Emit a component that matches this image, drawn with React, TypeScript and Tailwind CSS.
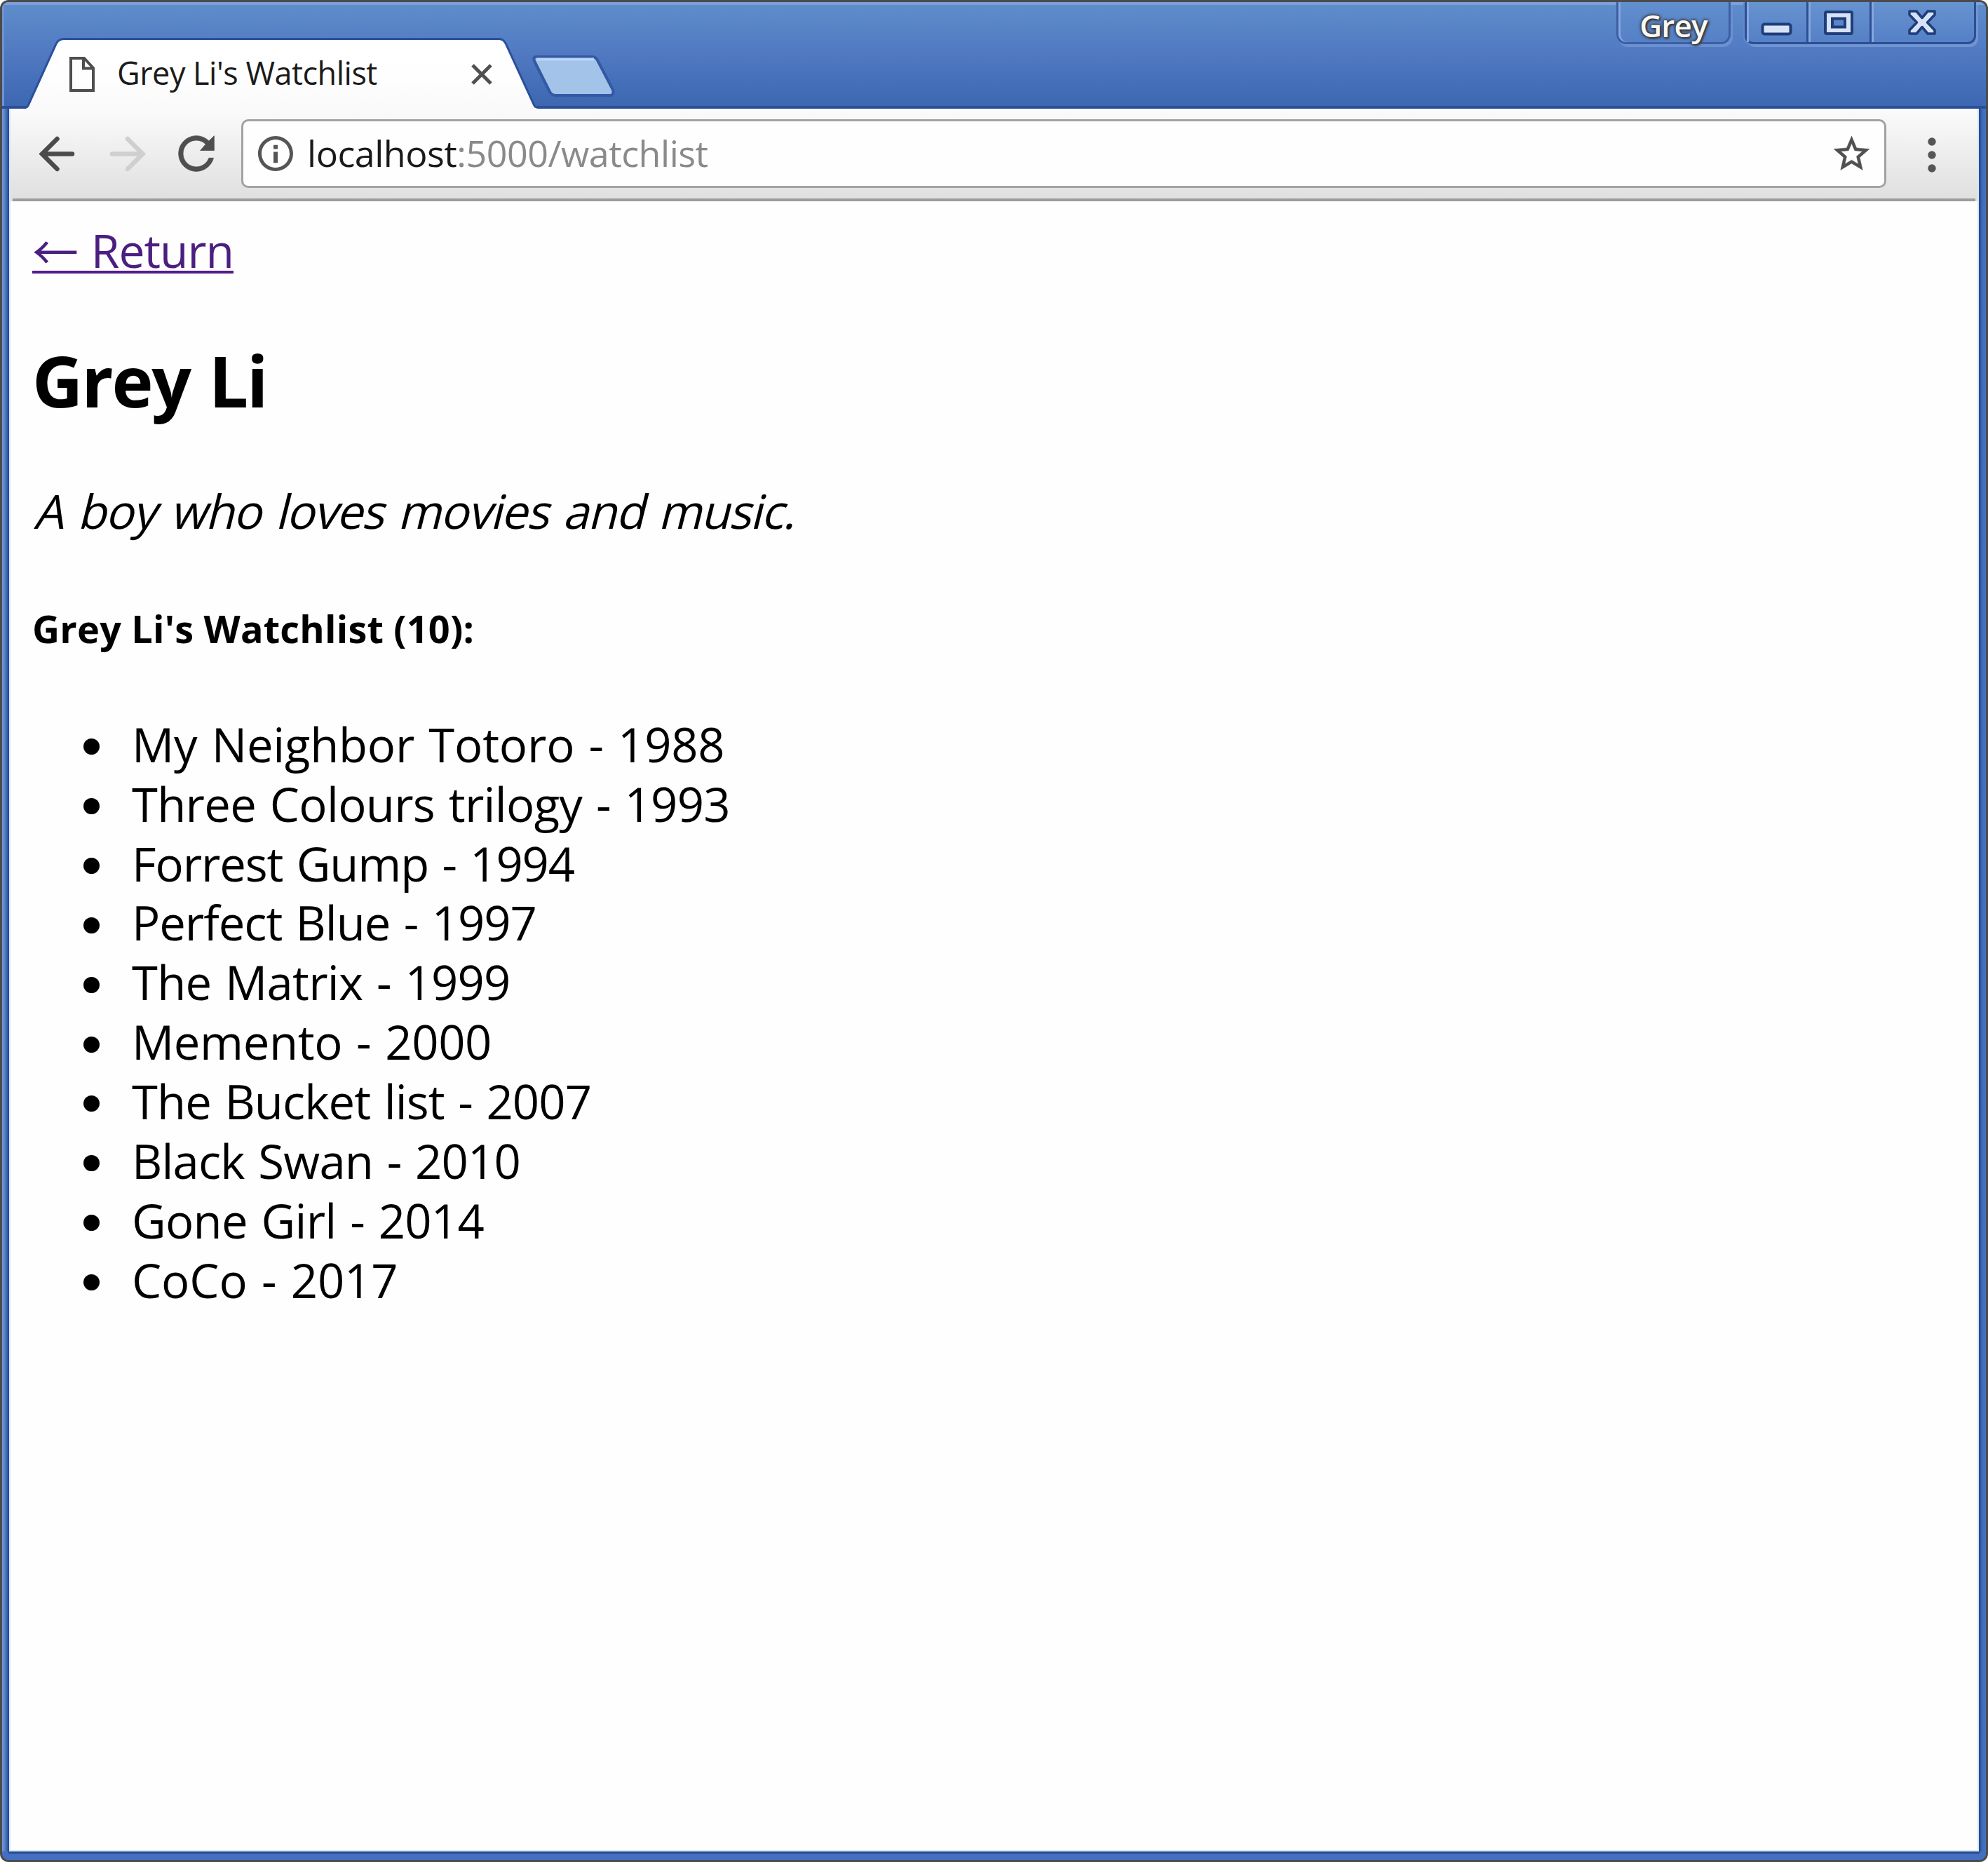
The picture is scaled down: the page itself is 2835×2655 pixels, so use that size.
const movies = [
  { title: 'My Neighbor Totoro', year: 1988, tracking: 'tracking-[-0.2px]' },
  { title: 'Three Colours trilogy', year: 1993, tracking: 'tracking-[-0.7px]' },
  { title: 'Forrest Gump', year: 1994, tracking: 'tracking-[-1.1px]' },
  { title: 'Perfect Blue', year: 1997, tracking: 'tracking-[-1.03px]' },
  { title: 'The Matrix', year: 1999, tracking: 'tracking-[-0.75px]' },
  { title: 'Memento', year: 2000, tracking: 'tracking-[-0.39px]' },
  { title: 'The Bucket list', year: 2007, tracking: 'tracking-[-0.9px]' },
  { title: 'Black Swan', year: 2010, tracking: 'tracking-[-0.8px]' },
  { title: 'Gone Girl', year: 2014, tracking: 'tracking-[-0.73px]' },
  { title: 'CoCo', year: 2017, tracking: 'tracking-[-0.1px]' },
];

function Tab() {
  return (
    <div className="relative mt-[50px] ml-[34px] flex h-[102px] w-[730px] shrink-0 items-center pl-[60px]">
      <svg className="absolute inset-0" width="730" height="102" viewBox="0 0 730 102">
        <defs>
          <linearGradient id="tabFill" x1="0" y1="0" x2="0" y2="1">
            <stop offset="0" stopColor="#ffffff" />
            <stop offset="0.5" stopColor="#fefefe" />
            <stop offset="1" stopColor="#f9f9f9" />
          </linearGradient>
        </defs>
        <path
          d="M-2 102 Q3 102 5 97 L44 11 Q47 4 54 4 H675 Q680 4 683 10 L723 97 Q725 102 731 102 V106 H-2Z"
          fill="url(#tabFill)"
          stroke="#2b509b"
          strokeWidth="6"
          paintOrder="stroke"
        />
      </svg>
      <svg className="relative mt-1 shrink-0" width="40" height="54" viewBox="0 0 40 54" fill="none" stroke="#4e4e4e" strokeWidth="4">
        <path d="M4 4 H23 L36 18 V50 H4Z M22 4 V18.500 H36" />
      </svg>
      <span className="relative ml-[30px] text-[45px] leading-[60px] tracking-[-0.5px] whitespace-nowrap text-[#1b1b1b]">
        Grey Li's Watchlist
      </span>
      <svg className="relative mt-1 mr-[62px] ml-auto" width="36" height="36" viewBox="0 0 36 36" stroke="#505050" strokeWidth="5">
        <path d="M5 5 L31 31 M31 5 L5 31" />
      </svg>
    </div>
  );
}

function WindowControls() {
  return (
    <div className="mr-[14px] ml-[20px] flex h-[60px] w-[330px] rounded-b-[12px] border-x-[3px] border-b-[3px] border-[#2c4f94] bg-linear-to-b from-[#6793d0] to-[#5580c6] shadow-[3px_4px_0_#7194d3,-2px_1px_0_#6489cc]">
      <div className="w-[88px] border-r-[3px] border-[#2c4f94] shadow-[inset_3px_0_0_#86a7de]">
        <svg width="85" height="57" viewBox="0 0 85 57">
          <rect x="22.500" y="31.500" width="40" height="14" rx="3" fill="#d6e3f7" stroke="#1f3d78" strokeWidth="4" />
        </svg>
      </div>
      <div className="w-[90px] border-r-[3px] border-[#2c4f94] shadow-[inset_3px_0_0_#86a7de]">
        <svg width="87" height="57" viewBox="0 0 87 57" stroke="#1f3d78" strokeWidth="4">
          <rect x="24" y="14" width="38" height="31" rx="2" fill="#d6e3f7" />
          <rect x="34" y="23.500" width="18" height="12" fill="#5a86cb" />
        </svg>
      </div>
      <div className="flex-1 shadow-[inset_3px_0_0_#86a7de]">
        <svg width="146" height="57" viewBox="0 0 146 57" fill="#d6e3f7" stroke="#1f3d78" strokeWidth="3.500" strokeLinejoin="round">
          <path d="M54 13 H64 L72 22.500 L80 13 H90 V18 L79.500 29 L90 40 V45 H80 L72 35.500 L64 45 H54 V40 L64.500 29 L54 18Z" />
        </svg>
      </div>
    </div>
  );
}

function TitleBar() {
  return (
    <header className="flex h-[152px] items-start border-b-[4px] border-[#2a4e98] bg-linear-to-b from-[#5f8ecb] via-[#5079c2] to-[#3d67b1] shadow-[inset_0_4px_0_#7fa0d8,inset_3px_0_0_#6f94d2]">
      <Tab />
      <svg className="relative mt-[73px] -ml-[14px] shrink-0" width="130" height="66" viewBox="0 0 130 66">
        <path
          d="M12 5 H91 Q97 5 99 10 L121 52 Q123 60 117 60 H39 Q34 60 31 55 L9 11 Q7 5 12 5Z"
          fill="#a3c3e8"
          stroke="#3359a4"
          strokeWidth="4"
        />
        <path d="M12 8.500 H94" stroke="#b9d5fa" strokeWidth="4" />
      </svg>
      <div className="ml-auto flex h-[60px] w-[163px] justify-center rounded-b-[14px] border-x-[3px] border-b-[3px] border-[#3b60a4] bg-linear-to-b from-[#628fce] to-[#5580c6] pt-[5px] text-[44px] leading-[57px] font-semibold tracking-[-0.8px] text-[#f8f8f6] shadow-[3px_4px_0_#6c90d1,inset_3px_0_0_#86a7de] [text-shadow:0_0_3px_#333,0_0_4px_#333,0_0_5px_#444,2px_2px_3px_#444]">
        <span>Grey</span>
      </div>
      <WindowControls />
    </header>
  );
}

function Toolbar() {
  return (
    <div className="bg-linear-to-b from-[#fbfbfb] to-[#dfdfdf] px-[3px]">
      <div className="flex h-[132px] items-center border-b-[4px] border-[#9c9c9c] pl-[26px]">
        <svg className="shrink-0" width="75" height="75" viewBox="0 0 75 75" fill="none" stroke="#4b4b4b" strokeWidth="6.500" strokeLinecap="round">
          <path d="M59 37.500 H18 M37.500 16 L16 37.500 L37.500 59" />
        </svg>
        <svg className="ml-[25px] shrink-0" width="75" height="75" viewBox="0 0 75 75" fill="none" stroke="#cfcfcf" strokeWidth="6.500" strokeLinecap="round">
          <path d="M16 37.500 H57 M38 16 L59.500 37.500 L38 59" />
        </svg>
        <svg className="ml-[23px] shrink-0" width="76" height="76" viewBox="0 0 24 24" fill="#4f4f4f" stroke="#4f4f4f" strokeWidth="0.250">
          <path d="M17.650 6.350C16.200 4.900 14.210 4 12 4c-4.420 0-7.990 3.580-7.990 8s3.570 8 7.990 8c3.730 0 6.840-2.550 7.730-6h-2.080c-.82 2.330-3.040 4-5.650 4-3.310 0-6-2.690-6-6s2.690-6 6-6c1.660 0 3.140.69 4.220 1.780L13.800 10.600h6.200V4l-2.350 2.350z" />
        </svg>
        <div className="ml-[26px] flex h-[98px] w-[2346px] items-center rounded-[10px] border-[3px] border-[#a2a2a2] bg-[#fefefe] px-[16px]">
          <svg className="shrink-0" width="60" height="60" viewBox="0 0 24 24" fill="#555555">
            <path d="M10.800 11h2.400v6.300h-2.400z M10.800 7.100h2.400v2.300h-2.400z M12 2C6.480 2 2 6.480 2 12s4.480 10 10 10 10-4.480 10-10S17.520 2 12 2zm0 18c-4.410 0-8-3.590-8-8s3.590-8 8-8 8 3.590 8 8-3.590 8-8 8z" />
          </svg>
          <span className="ml-[15px] pb-[3px] text-[52px] leading-[70px] tracking-[-0.5px] whitespace-nowrap text-[#8a8a8a]">
            <span className="text-[#1a1a1a]">localhost</span>:5000/watchlist
          </span>
          <svg className="ml-auto shrink-0" width="61" height="61" viewBox="0 0 24 24" fill="#505050" stroke="#505050" strokeWidth="0.200">
            <path d="M22 9.240l-7.190-.62L12 2 9.190 8.630 2 9.240l5.460 4.730L5.820 21 12 17.270 18.180 21l-1.630-7.030L22 9.240zM12 15.400l-3.760 2.270 1-4.280-3.320-2.880 4.380-.38L12 6.100l1.710 4.040 4.380.38-3.320 2.880 1 4.280L12 15.400z" />
          </svg>
        </div>
        <svg className="mt-[4px] ml-[59px] shrink-0" width="12" height="50" viewBox="0 0 12 50" fill="#555555">
          <circle cx="6" cy="6" r="5.700" />
          <circle cx="6" cy="25" r="5.700" />
          <circle cx="6" cy="44" r="5.700" />
        </svg>
      </div>
    </div>
  );
}

function Page() {
  return (
    <main className="flex-1 bg-[#fefefe] pt-[26px] pl-[31px] text-black">
      <a className="flex h-[77px] w-[287px] items-start border-b-[4px] border-[#551a8b] text-[66px] leading-[86px] text-[#4b1f80]">
        <span className="w-[85px] font-['Noto_Sans_CJK_SC',sans-serif]">←</span>
        <span className="tracking-[-1px]">Return</span>
      </a>
      <h2 className="mt-[86px] text-[100px] leading-[132px] font-bold tracking-[-2.2px] [word-spacing:3px]">Grey Li</h2>
      <p className="mt-[78px] ml-[2px] h-[85px] origin-[0_68px] -skew-x-[14deg] text-[67px] leading-[85px] tracking-[-1.35px] [word-spacing:5px]">
        A boy who loves movies and music.
      </p>
      <h4 className="mt-[89px] text-[54px] leading-[72px] font-bold tracking-[0.2px]">Grey Li's Watchlist (10):</h4>
      <ul className="mt-[87px] pl-[73px]">
        {movies.map((m) => (
          <li key={m.title} className="flex h-[84.85px] items-center">
            <span className="mt-[7px] mr-[46px] size-[23px] rounded-full bg-black" />
            <span className={`text-[67px] leading-[85px] whitespace-nowrap [word-spacing:3px] ${m.tracking}`}>
              {m.title} - {m.year}
            </span>
          </li>
        ))}
      </ul>
    </main>
  );
}

export default function App() {
  return (
    <div className="h-[2655px] w-[2835px] overflow-hidden bg-white font-['Open_Sans',sans-serif]">
      <div className="h-full rounded-[12px] bg-[#4b4b4d] p-[3px]">
        <div className="flex h-full flex-col overflow-hidden rounded-[9px] bg-[#446fbd]">
          <TitleBar />
          <div className="flex flex-1">
            <div className="w-[10px] bg-linear-to-r from-[#7a9bd6] via-[#4a76c2] to-[#1d4587]" />
            <div className="flex w-[2809px] flex-col border-x-[2px] border-b-[2px] border-[#dbe7f6]">
              <Toolbar />
              <Page />
            </div>
            <div className="w-[10px] bg-linear-to-r from-[#1d4587] via-[#3f6dbb] to-[#4672c0]" />
          </div>
          <div className="mx-[9px] h-[3px] bg-[#234a8e]" />
          <div className="h-[9px] bg-[#446fc0]" />
        </div>
      </div>
    </div>
  );
}
